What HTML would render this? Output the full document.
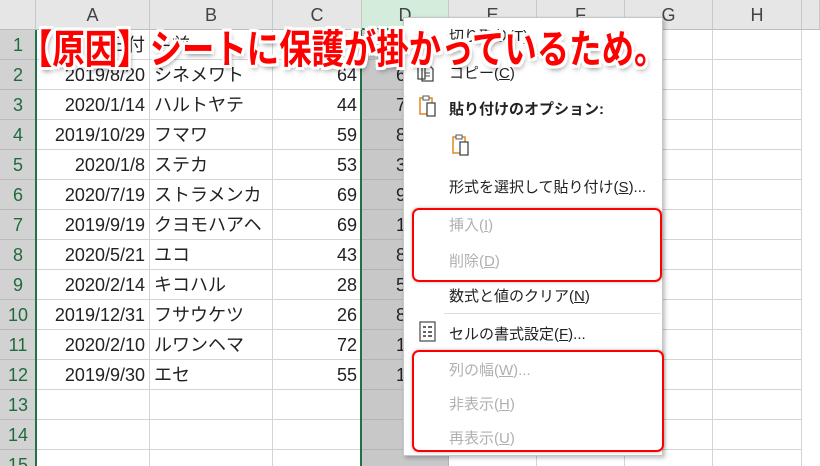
<!DOCTYPE html>
<html><head><meta charset="utf-8"><style>
html,body{margin:0;width:820px;height:466px;overflow:hidden;}
body{background:#fff;position:relative;font-family:"Liberation Sans","Noto Sans CJK JP",sans-serif;}
.a{position:absolute;box-sizing:border-box;}
.hdr{background:#e6e6e6;border-right:1px solid #c8c8c8;border-bottom:1px solid #bdbdbd;text-align:center;line-height:30px;font-size:18px;color:#444;height:30px;top:0}
.rn{left:0;width:36px;background:#d2d2d2;border-bottom:1px solid #bbb;text-align:center;font-size:18px;color:#1e6b3c;line-height:30px;height:30px}
.c{height:30px;line-height:30px;font-size:18px;color:#222;border-right:1px solid #d4d4d4;border-bottom:1px solid #d4d4d4;white-space:nowrap;overflow:hidden}
.mi{position:absolute;left:449px;font-size:15px;color:#222;white-space:nowrap;font-family:"Liberation Sans","Noto Sans CJK JP",sans-serif}
.dis{color:#b0b0b0}
.box{position:absolute;border:2px solid #f00;border-radius:7px;box-shadow:0 0 3px rgba(0,0,0,.3)}
</style></head><body>
<div class="a hdr" style="left:0;width:36px;background:#e6e6e6"></div>
<div class="a hdr" style="left:36px;width:114px">A</div>
<div class="a hdr" style="left:150px;width:123px">B</div>
<div class="a hdr" style="left:273px;width:89px">C</div>
<div class="a hdr" style="left:362px;width:87px;background:#d3ecdc;border-bottom:2px solid #217346">D</div>
<div class="a hdr" style="left:449px;width:88px">E</div>
<div class="a hdr" style="left:537px;width:88px">F</div>
<div class="a hdr" style="left:625px;width:88px">G</div>
<div class="a hdr" style="left:713px;width:89px">H</div>
<div class="a hdr" style="left:802px;width:18px"></div>
<div id="g"></div>
<script>
var d=[["日付","名前","",""],["2019/8/20","シネメワト","64","6"],["2020/1/14","ハルトヤテ","44","7"],["2019/10/29","フマワ","59","8"],["2020/1/8","ステカ","53","3"],["2020/7/19","ストラメンカ","69","9"],["2019/9/19","クヨモハアヘ","69","1"],["2020/5/21","ユコ","43","8"],["2020/2/14","キコハル","28","5"],["2019/12/31","フサウケツ","26","8"],["2020/2/10","ルワンヘマ","72","1"],["2019/9/30","エセ","55","1"],["","","",""],["","","",""],["","","",""]];
var h="";
for(var i=0;i<15;i++){var y=30+i*30;var r=d[i];
h+='<div class="a rn" style="top:'+y+'px">'+(i+1)+'</div>';
h+='<div class="a c" style="top:'+y+'px;left:36px;width:114px;text-align:right;padding-right:4px">'+r[0]+'</div>';
h+='<div class="a c" style="top:'+y+'px;left:150px;width:123px;padding-left:4px">'+r[1]+'</div>';
h+='<div class="a c" style="top:'+y+'px;left:273px;width:89px;text-align:right;padding-right:4px">'+r[2]+'</div>';
h+='<div class="a c" style="top:'+y+'px;left:362px;width:87px;background:#c8c8c8;border-color:#b4b4b4;padding-left:34px">'+r[3]+'</div>';
for(var k=0;k<4;k++)h+='<div class="a c" style="top:'+y+'px;left:'+(449+k*88)+'px;width:'+(k==3?89:88)+'px"></div>';
}
document.getElementById("g").innerHTML=h;
</script>
<div class="a" style="left:35px;top:30px;width:2px;height:436px;background:#217346"></div>
<div class="a" style="left:360px;top:30px;width:2px;height:436px;background:#217346"></div>
<div class="a" style="left:403px;top:17px;width:260px;height:439px;background:#fff;border:1px solid #c6c6c6;box-shadow:2px 2px 4px rgba(0,0,0,.25)"></div>
<div class="mi" style="top:25px">切り取り(T)</div>
<div class="mi" style="top:62px">コピー(<u>C</u>)</div>
<div class="mi" style="top:98px;font-weight:bold">貼り付けのオプション:</div>
<div class="mi" style="top:176px">形式を選択して貼り付け(<u>S</u>)...</div>
<div class="mi dis" style="top:214px">挿入(<u>I</u>)</div>
<div class="mi dis" style="top:250px">削除(<u>D</u>)</div>
<div class="mi" style="top:285px">数式と値のクリア(<u>N</u>)</div>
<div class="a" style="left:444px;top:313px;width:217px;height:1px;background:#ddd"></div>
<div class="mi" style="top:323px">セルの書式設定(<u>F</u>)...</div>
<div class="mi dis" style="top:359px">列の幅(<u>W</u>)...</div>
<div class="mi dis" style="top:393px">非表示(<u>H</u>)</div>
<div class="mi dis" style="top:427px">再表示(<u>U</u>)</div>
<svg class="a" style="left:415px;top:60px" width="24" height="24"><path d="M3 2h7v17H3z M7 6h8l3 3v12H7z" fill="#fff" stroke="#444" stroke-width="1.3"/><path d="M10 13h5M10 16h5" stroke="#444"/></svg>
<svg class="a" style="left:418px;top:94px" width="24" height="26"><path d="M2 4h12v16H2z" fill="none" stroke="#e08a1e" stroke-width="1.5"/><path d="M5 2h6v4H5z" fill="#fff" stroke="#555"/><path d="M9 9h8v13H9z" fill="#fff" stroke="#444" stroke-width="1.3"/></svg>
<svg class="a" style="left:451px;top:133px" width="24" height="26"><path d="M2 4h12v16H2z" fill="none" stroke="#e08a1e" stroke-width="1.5"/><path d="M5 2h6v4H5z" fill="#fff" stroke="#555"/><path d="M9 9h8v13H9z" fill="#fff" stroke="#444" stroke-width="1.3"/></svg>
<svg class="a" style="left:419px;top:321px" width="20" height="22"><rect x="1" y="1" width="15" height="19" fill="#fff" stroke="#555" stroke-width="1.3"/><path d="M4 6h3M4 11h3M4 15h3M9 6h4M9 11h4M9 15h4" stroke="#666" stroke-width="2"/></svg>
<div class="box" style="left:412px;top:208px;width:246px;height:70px"></div>
<div class="box" style="left:412px;top:350px;width:248px;height:98px"></div>
<div class="a" style="left:20px;top:18px;font-size:40px;line-height:56px;font-weight:bold;color:#f00;white-space:nowrap;transform:scaleX(0.81);transform-origin:0 0;font-family:'Noto Sans CJK JP',sans-serif;text-shadow:-3px -3px 0 #fff,3px -3px 0 #fff,-3px 3px 0 #fff,3px 3px 0 #fff,0 -3px 0 #fff,0 3px 0 #fff,-3px 0 0 #fff,3px 0 0 #fff,2px 4px 6px rgba(0,0,0,.5)">【原因】シートに保護が掛かっているため。</div>
</body></html>
